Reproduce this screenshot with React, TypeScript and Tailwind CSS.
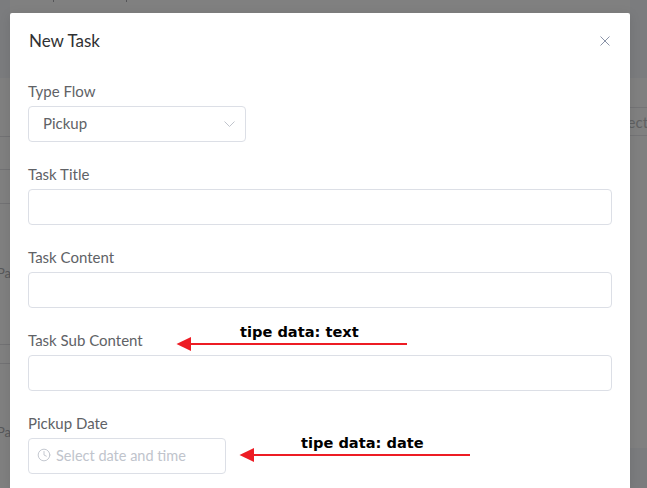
import type { ReactNode } from "react";
import { Clock } from "lucide-react";

function Field({ label, children }: { label: string; children?: ReactNode }) {
  return (
    <div className="flex flex-col">
      <div className="h-[32px] text-[15px] leading-[34px] text-[#606266]">{label}</div>
      {children ?? <div className="h-[36px] rounded-[4px] border border-[#dcdfe6] bg-white" />}
    </div>
  );
}

function Arrow() {
  return (
    <svg width="240" height="16" viewBox="0 0 240 16" className="block">
      <path d="M233 8H14" stroke="#ed1c24" strokeWidth="2" />
      <path d="M2.500 8 17 1V15Z" fill="#ed1c24" />
    </svg>
  );
}

// the page behind the overlay, only its edges stay visible
function Backdrop() {
  return (
    <div className="flex h-[488px] w-[647px] bg-[#808080]">
      <div className="flex w-[10px] flex-col overflow-hidden text-[13px] text-[#57585a]">
        <div className="h-[78px] shrink-0 bg-[#7b7c7e]" />
        <div className="h-[59px] shrink-0 border-b border-[#727274]" />
        <div className="h-[33px] shrink-0 border-b border-[#727274]" />
        <div className="h-[34px] shrink-0 border-b border-[#727274]" />
        <div className="flex h-[141px] shrink-0 flex-col border-b border-[#727274] pt-[60px]">
          <span className="-ml-[3px] leading-[18px]">Pa</span>
        </div>
        <div className="h-[19px] shrink-0 border-b border-[#727274]" />
        <div className="flex flex-col pt-[59px]">
          <span className="-ml-[3px] leading-[18px]">Pa</span>
        </div>
      </div>
      <div className="flex w-[620px] gap-[72px] pl-[43px]">
        <div className="h-[2px] w-px bg-[#555558]" />
        <div className="h-[2px] w-px bg-[#555558]" />
      </div>
      <div className="flex w-[17px] flex-col overflow-hidden">
        <div className="h-[78px] shrink-0 bg-[#7b7c7e]" />
        <div className="h-[30px] shrink-0 border-b border-[#747476]" />
        <div className="h-[28px] shrink-0 border-b border-[#747476] text-[15px] leading-[29px] text-[#5f6062]">
          <span className="-ml-[22px] inline-block">Select</span>
        </div>
        <div className="h-[312px] shrink-0" />
        <div className="flex-1 bg-[#7b7c7e]" />
      </div>
    </div>
  );
}

export default function App() {
  return (
    <div className="relative h-[488px] w-[647px] overflow-hidden font-['Lato',sans-serif]">
      <Backdrop />

      <div className="absolute left-[10px] top-[13px] flex h-[475px] w-[620px] flex-col rounded-t-[2px] bg-white px-[18px] shadow-[0_2px_12px_rgba(0,0,0,0.1)]">
        <div className="mb-[5px] flex h-[56px] shrink-0 items-center justify-between pl-px">
          <div className="text-[17px] text-[#303133]">New Task</div>
          <svg width="10" height="10" viewBox="0 0 10 10" className="mr-[2px] text-[#8a93a8]">
            <path d="M0.5 0.5 9.5 9.5 M9.5 0.5 0.5 9.5" stroke="currentColor" strokeWidth="1" fill="none" />
          </svg>
        </div>
        <div className="flex flex-col gap-[15px]">
          <Field label="Type Flow">
            <div className="flex h-[36px] w-[218px] items-center justify-between rounded-[4px] border border-[#dcdfe6] pl-[14px] pr-[10px]">
              <span className="pb-px text-[15px] text-[#606266]">Pickup</span>
              <svg width="11" height="7" viewBox="0 0 11 7" className="text-[#c0c4cc]">
                <path d="M0.5 0.5 5.5 5.5 10.5 0.5" stroke="currentColor" strokeWidth="1" fill="none" />
              </svg>
            </div>
          </Field>
          <Field label="Task Title" />
          <Field label="Task Content" />
          <Field label="Task Sub Content" />
          <Field label="Pickup Date">
            <div className="flex h-[36px] w-[198px] items-center rounded-[4px] border border-[#dcdfe6] pl-[8px]">
              <Clock size={14} strokeWidth={1.6} className="mb-[2px] text-[#c0c4cc]" />
              <span className="ml-[5px] text-[14.5px] text-[#c0c4cc]">Select date and time</span>
            </div>
          </Field>
        </div>
      </div>

      {/* annotations pasted over the screenshot */}
      <div className="absolute left-[174px] top-[323px] flex flex-col">
        <div className="pl-[66px] font-['DejaVu_Sans',sans-serif] text-[14.6px] font-bold leading-[18px] text-black">tipe data: text</div>
        <div className="-mt-[5px]"><Arrow /></div>
      </div>
      <div className="absolute left-[237px] top-[434px] flex flex-col">
        <div className="pl-[64px] font-['DejaVu_Sans',sans-serif] text-[14.6px] font-bold leading-[18px] text-black">tipe data: date</div>
        <div className="-mt-[5px]"><Arrow /></div>
      </div>
    </div>
  );
}
